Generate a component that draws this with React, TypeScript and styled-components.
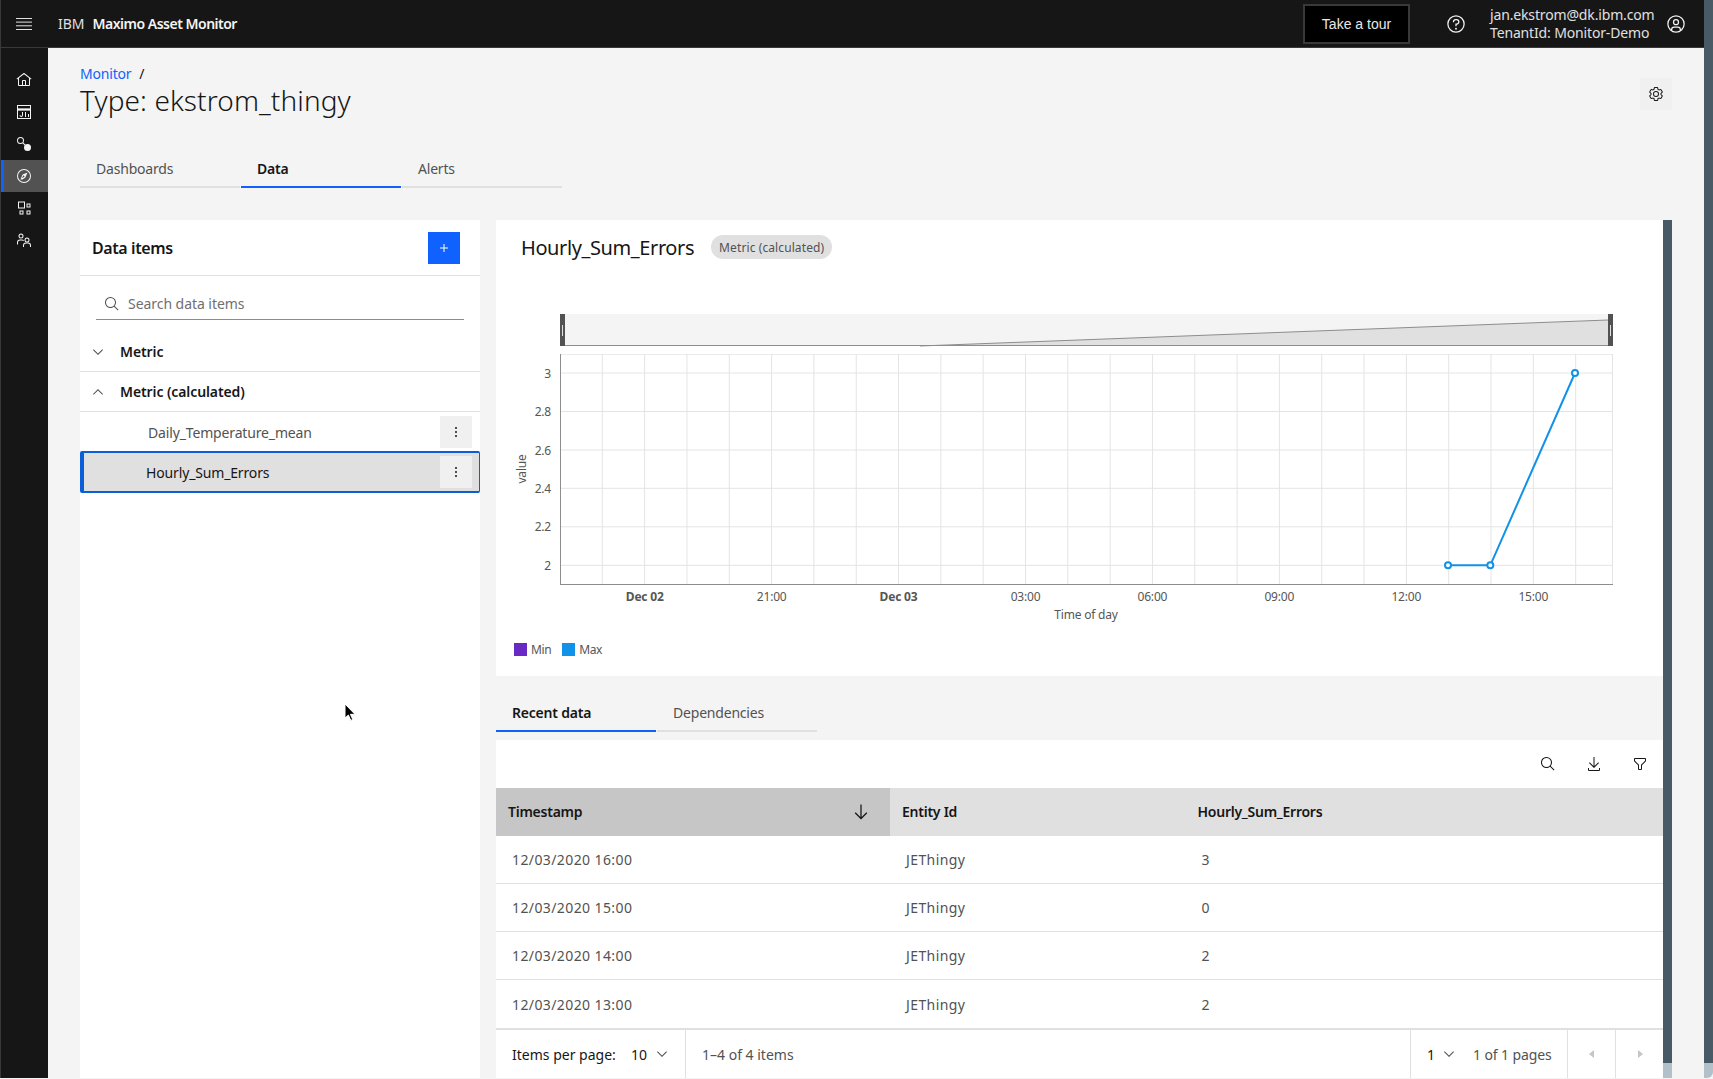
import styled, { createGlobalStyle } from "styled-components";

const FONT = `"Noto Sans", Roboto, "Liberation Sans", sans-serif`;

const GlobalStyle = createGlobalStyle`
    html, body {
        margin: 0;
        padding: 0;
        background: #f4f4f4;
        font-family: ${FONT};
        overflow: hidden;
    }
    * { box-sizing: border-box; }
`;

const Icon = ({ size = 16, fill = "currentColor", children }: { size?: number; fill?: string; children: React.ReactNode }) => (
    <svg width={size} height={size} viewBox="0 0 32 32" fill={fill} style={{ display: "block", flex: "none" }}>
        {children}
    </svg>
);

const SearchIcon = ({ size = 16 }: { size?: number }) => (
    <Icon size={size}><path d="M29 27.586l-7.552-7.552a11.018 11.018 0 1 0-1.414 1.414L27.586 29zM4 13a9 9 0 1 1 9 9 9.01 9.01 0 0 1-9-9z" /></Icon>
);
const ChevronDown = () => <Icon><path d="M16 22L6 12l1.4-1.4 8.6 8.6 8.6-8.6L26 12z" /></Icon>;
const ChevronUp = () => <Icon><path d="M16 10l10 10-1.4 1.4-8.6-8.6-8.6 8.6L6 20z" /></Icon>;
const Overflow = () => <Icon><circle cx="16" cy="8" r="2" /><circle cx="16" cy="16" r="2" /><circle cx="16" cy="24" r="2" /></Icon>;

const HOUR_LINES = Array.from({ length: 24 }, (_, n) => 602.3 + 42.32 * n);
const VALUE_TICKS = [
    { label: "3", y: 373 },
    { label: "2.8", y: 411.5 },
    { label: "2.6", y: 450 },
    { label: "2.4", y: 488.3 },
    { label: "2.2", y: 526.8 },
    { label: "2", y: 565.3 },
];
const TIME_TICKS = [
    { label: "Dec 02", x: 644.7, bold: true },
    { label: "21:00", x: 771.7 },
    { label: "Dec 03", x: 898.5, bold: true },
    { label: "03:00", x: 1025.5 },
    { label: "06:00", x: 1152.4 },
    { label: "09:00", x: 1279.3 },
    { label: "12:00", x: 1406.3 },
    { label: "15:00", x: 1533.3 },
];
const POINTS = [
    [1448, 565.3],
    [1490.3, 565.3],
    [1575, 373],
];
const RECENT = ["16:00|3", "15:00|0", "14:00|2", "13:00|2"];

const NAV = [
    <path key="h" d="M16.612 2.214a1.01 1.01 0 0 0-1.242 0L1 13.419 2.242 15 4 13.63V26a2.006 2.006 0 0 0 2 2h20a2.006 2.006 0 0 0 2-2V13.64L29.758 15 31 13.428zM18 26h-4v-8h4zm2 0v-8a2.002 2.002 0 0 0-2-2h-4a2.002 2.002 0 0 0-2 2v8H6V12.071l10-7.79 10 7.8V26z" />,
    <g key="d">
        <path fillRule="evenodd" d="M2 2h28v28H2zM4 4v5h24V4zM4 13v15h24V13z" />
        <path d="M4 9h24v4H4z" opacity=".55" />
        <path d="M14 16v6.5a3.5 3.5 0 1 1-7 0h2a1.5 1.5 0 1 0 3 0V16zM18 16h2v10h-2zM24 20h2v6h-2z" />
    </g>,
    <g key="n">
        <path d="M9 2a7 7 0 1 0 7 7 7 7 0 0 0-7-7zm0 12a5 5 0 1 1 5-5 5 5 0 0 1-5 5z" />
        <path d="M13.5 15l1.5-1.5 5 5-1.5 1.5z" />
        <circle cx="23" cy="23" r="7" />
    </g>,
    <g key="c">
        <path d="M16 2a14 14 0 1 0 14 14A14 14 0 0 0 16 2zm0 26a12 12 0 1 1 12-12 12 12 0 0 1-12 12z" />
        <path d="M23 9l-4.2 10.2L13 23l-4 0 4.2-10.2zM14.6 14.6l-2.4 5.2 5.2-2.4z" />
    </g>,
    <g key="a">
        <path d="M4 3h14v14H4zm2 2v10h10V5zM21 7h8v8h-8zm2 2v4h4V9zM7 21h8v8H7zm2 2v4h4v-4zM21 21h8v8h-8zm2 2v4h4v-4z" fillRule="evenodd" />
    </g>,
    <g key="u">
        <path d="M10 3a5 5 0 1 0 5 5 5 5 0 0 0-5-5zm0 8a3 3 0 1 1 3-3 3 3 0 0 1-3 3z" />
        <path d="M2 25v-4a6 6 0 0 1 6-6h4a6 6 0 0 1 4 1.6L14.6 18A4 4 0 0 0 12 17H8a4 4 0 0 0-4 4v4z" />
        <path d="M22 11a5 5 0 1 0 5 5 5 5 0 0 0-5-5zm0 8a3 3 0 1 1 3-3 3 3 0 0 1-3 3z" />
        <path d="M30 30h-2v-3a4 4 0 0 0-4-4h-4a4 4 0 0 0-4 4v3h-2v-3a6 6 0 0 1 6-6h4a6 6 0 0 1 6 6z" />
    </g>,
];

export default function App() {
    return (
        <Page>
            <GlobalStyle />
            <Workspace>
                <TopBar>
                    <Hamburger>
                        <svg width="16" height="12" viewBox="0 0 16 12" fill="currentColor">
                            <rect width="16" height="1" />
                            <rect y="3.6" width="16" height="1" />
                            <rect y="7.3" width="16" height="1" />
                            <rect y="11" width="16" height="1" />
                        </svg>
                    </Hamburger>
                    <Brand>IBM<strong>Maximo Asset Monitor</strong></Brand>
                    <TourButton>Take a tour</TourButton>
                    <HeaderIcon $left={36}>
                        <Icon size={20}>
                            <path d="M16 2a14 14 0 1 0 14 14A14 14 0 0 0 16 2zm0 26a12 12 0 1 1 12-12 12 12 0 0 1-12 12z" />
                            <circle cx="16" cy="23.5" r="1.5" />
                            <path d="M17 8h-1.5a4.49 4.49 0 0 0-4.5 4.5v.5h2v-.5a2.5 2.5 0 0 1 2.5-2.5H17a2.5 2.5 0 0 1 0 5h-2v4.5h2V17a4.5 4.5 0 0 0 0-9z" />
                        </Icon>
                    </HeaderIcon>
                    <UserText>
                        <span>jan.ekstrom@dk.ibm.com</span>
                        <span>TenantId: Monitor-Demo</span>
                    </UserText>
                    <HeaderIcon $left={13}>
                        <Icon size={20}>
                            <path d="M16 8a5 5 0 1 0 5 5 5 5 0 0 0-5-5zm0 8a3 3 0 1 1 3-3 3.003 3.003 0 0 1-3 3z" />
                            <path d="M16 2a14 14 0 1 0 14 14A14.016 14.016 0 0 0 16 2zm-6 24.377V25a3.003 3.003 0 0 1 3-3h6a3.003 3.003 0 0 1 3 3v1.377a11.899 11.899 0 0 1-12 0zm13.992-1.451A5.002 5.002 0 0 0 19 20h-6a5.002 5.002 0 0 0-4.992 4.926 12 12 0 1 1 15.985 0z" />
                        </Icon>
                    </HeaderIcon>
                </TopBar>
                <Below>
                    <SideNav>
                        {NAV.map((icon, i) => (
                            <NavItem key={i} $active={i === 3}>
                                <Icon>{icon}</Icon>
                            </NavItem>
                        ))}
                    </SideNav>
                    <Main>
                        <PageHead>
                            <div>
                                <Crumbs><a>Monitor</a><span>/</span></Crumbs>
                                <PageTitle>Type: ekstrom_thingy</PageTitle>
                            </div>
                            <GearButton>
                                <Icon>
                                    <path d="M27 16.76c0-.25 0-.5 0-.76s0-.51 0-.77l1.92-1.68A2 2 0 0 0 29.3 11l-2.36-4a2 2 0 0 0-1.73-1 2 2 0 0 0-.64.1l-2.43.82a11.35 11.35 0 0 0-1.31-.75l-.51-2.52a2 2 0 0 0-2-1.61h-4.68a2 2 0 0 0-2 1.61l-.51 2.52a11.48 11.48 0 0 0-1.32.75l-2.38-.86A2 2 0 0 0 6.79 6a2 2 0 0 0-1.73 1L2.7 11a2 2 0 0 0 .41 2.51L5 15.24c0 .25 0 .5 0 .76s0 .51 0 .77l-1.92 1.68A2 2 0 0 0 2.7 21l2.36 4a2 2 0 0 0 1.73 1 2 2 0 0 0 .64-.1l2.43-.82a11.35 11.35 0 0 0 1.31.75l.51 2.52a2 2 0 0 0 2 1.61h4.72a2 2 0 0 0 2-1.61l.51-2.52a11.48 11.48 0 0 0 1.32-.75l2.42.82a2 2 0 0 0 .64.1 2 2 0 0 0 1.73-1l2.28-4a2 2 0 0 0-.41-2.51zM25.21 24l-3.43-1.16a8.86 8.86 0 0 1-2.71 1.57L18.36 28h-4.72l-.71-3.55a9.36 9.36 0 0 1-2.7-1.57L6.79 24l-2.36-4 2.72-2.4a8.9 8.9 0 0 1 0-3.13L4.43 12l2.36-4 3.43 1.16a8.86 8.86 0 0 1 2.71-1.57L13.64 4h4.72l.71 3.55a9.36 9.36 0 0 1 2.7 1.57L25.21 8l2.36 4-2.72 2.4a8.9 8.9 0 0 1 0 3.13L27.57 20z" />
                                    <path d="M16 22a6 6 0 1 1 6-6 5.94 5.94 0 0 1-6 6zm0-10a3.91 3.91 0 0 0-4 4 3.91 3.91 0 0 0 4 4 3.91 3.91 0 0 0 4-4 3.91 3.91 0 0 0-4-4z" />
                                </Icon>
                            </GearButton>
                        </PageHead>

                        <Tabs $top={28}>
                            <Tab>Dashboards</Tab>
                            <Tab $active>Data</Tab>
                            <Tab>Alerts</Tab>
                        </Tabs>

                        <Content>
                            <ItemsPanel>
                                <ItemsHead>
                                    <h2>Data items</h2>
                                    <AddButton><Icon><path d="M17 15V8h-2v7H8v2h7v7h2v-7h7v-2z" /></Icon></AddButton>
                                </ItemsHead>
                                <SearchBox>
                                    <SearchIcon />
                                    <span>Search data items</span>
                                </SearchBox>
                                <GroupRow>
                                    <ChevronDown />
                                    <span>Metric</span>
                                </GroupRow>
                                <GroupRow>
                                    <ChevronUp />
                                    <span>Metric (calculated)</span>
                                </GroupRow>
                                <ItemRow>
                                    <span>Daily_Temperature_mean</span>
                                    <RowMenu><Overflow /></RowMenu>
                                </ItemRow>
                                <ItemRow $selected>
                                    <span>Hourly_Sum_Errors</span>
                                    <RowMenu><Overflow /></RowMenu>
                                </ItemRow>
                            </ItemsPanel>

                            <DetailColumn>
                                <DetailBody>
                                    <ChartCard>
                                        <ChartHead>
                                            <h3>Hourly_Sum_Errors</h3>
                                            <Tag>Metric (calculated)</Tag>
                                        </ChartHead>
                                        <ChartSvg width="1167" height="330" viewBox="496 300 1167 330">
                                            <rect x="560" y="314" width="1053" height="32" fill="#f4f4f4" />
                                            <polygon points="920,346 1608,320 1608,346" fill="#e0e0e0" />
                                            <line x1="920" y1="346" x2="1608" y2="320" stroke="#8d8d8d" />
                                            <line x1="560" y1="345.5" x2="1613" y2="345.5" stroke="#8d8d8d" />
                                            <rect x="560" y="314" width="5" height="32" fill="#525252" />
                                            <rect x="562" y="325" width="1" height="11" fill="#e0e0e0" />
                                            <rect x="1608" y="314" width="5" height="32" fill="#525252" />
                                            <rect x="1610" y="325" width="1" height="11" fill="#e0e0e0" />

                                            <line x1="560" y1="354.5" x2="1612.5" y2="354.5" stroke="#ececec" />
                                            <line x1="1612.5" y1="354" x2="1612.5" y2="584" stroke="#e4e4e4" />
                                            {HOUR_LINES.map((x) => (
                                                <line key={x} x1={x} y1="354" x2={x} y2="584" stroke="#e4e4e4" />
                                            ))}
                                            {VALUE_TICKS.map((t) => (
                                                <g key={t.label}>
                                                    <line x1="560" y1={t.y} x2="1612.5" y2={t.y} stroke="#e4e4e4" />
                                                    <text x="551" y={t.y + 4.5} textAnchor="end">{t.label}</text>
                                                </g>
                                            ))}
                                            <line x1="560.5" y1="354" x2="560.5" y2="584" stroke="#8d8d8d" />
                                            <line x1="560" y1="584.5" x2="1613" y2="584.5" stroke="#8d8d8d" />
                                            {TIME_TICKS.map((t) => (
                                                <text key={t.label} x={t.x} y="601" textAnchor="middle" fontWeight={t.bold ? 700 : 400}>{t.label}</text>
                                            ))}
                                            <text x="1086" y="619" textAnchor="middle" letterSpacing="-0.5">Time of day</text>
                                            <text transform="translate(526 469) rotate(-90)" textAnchor="middle">value</text>

                                            <polyline points={POINTS.map((p) => p.join(",")).join(" ")} fill="none" stroke="#1192e8" strokeWidth="2" />
                                            {POINTS.map(([x, y]) => (
                                                <circle key={x} cx={x} cy={y} r="3" fill="#fff" stroke="#1192e8" strokeWidth="2" />
                                            ))}
                                        </ChartSvg>
                                        <Legend>
                                            <LegendItem $color="#6929c4">Min</LegendItem>
                                            <LegendItem $color="#1192e8">Max</LegendItem>
                                        </Legend>
                                    </ChartCard>

                                    <Tabs $top={16}>
                                        <Tab $active>Recent data</Tab>
                                        <Tab>Dependencies</Tab>
                                    </Tabs>

                                    <TableCard>
                                        <TableTools>
                                            <ToolButton><SearchIcon /></ToolButton>
                                            <ToolButton>
                                                <Icon><path d="M26 24v4H6v-4H4v4a2 2 0 0 0 2 2h20a2 2 0 0 0 2-2v-4zM26 14l-1.41-1.41L17 20.17V2h-2v18.17l-7.59-7.58L6 14l10 10 10-10z" /></Icon>
                                            </ToolButton>
                                            <ToolButton>
                                                <Icon><path d="M18 28h-4a2 2 0 0 1-2-2v-7.59L4.59 11A2 2 0 0 1 4 9.59V6a2 2 0 0 1 2-2h20a2 2 0 0 1 2 2v3.59a2 2 0 0 1-.59 1.41L20 18.41V26a2 2 0 0 1-2 2zM6 6v3.59l8 8V26h4v-8.41l8-8V6z" /></Icon>
                                            </ToolButton>
                                        </TableTools>
                                        <HeadRow>
                                            <HeadCell $sorted>
                                                Timestamp
                                                <Icon size={20}><path d="M24.59 16.59L17 24.17V4h-2v20.17l-7.59-7.58L6 18l10 10 10-10-1.41-1.41z" /></Icon>
                                            </HeadCell>
                                            <HeadCell>Entity Id</HeadCell>
                                            <HeadCell>Hourly_Sum_Errors</HeadCell>
                                        </HeadRow>
                                        {RECENT.map((r, i) => {
                                            const [time, value] = r.split("|");
                                            return (
                                                <BodyRow key={r} $last={i === RECENT.length - 1}>
                                                    <span>12/03/2020 {time}</span>
                                                    <span>JEThingy</span>
                                                    <span>{value}</span>
                                                </BodyRow>
                                            );
                                        })}
                                        <Pager>
                                            <PerPage>
                                                <PerPageLabel>Items per page:</PerPageLabel>
                                                <PagerValue>10</PagerValue>
                                                <ChevronDown />
                                            </PerPage>
                                            <PagerInfo>1–4 of 4 items</PagerInfo>
                                            <PageSelect>
                                                <PagerValue>1</PagerValue>
                                                <ChevronDown />
                                                <PagerNote>1 of 1 pages</PagerNote>
                                            </PageSelect>
                                            <PageStep>
                                                <svg width="16" height="16" viewBox="0 0 32 32" fill="currentColor"><path d="M20 24l-10-8 10-8z" /></svg>
                                            </PageStep>
                                            <PageStep>
                                                <svg width="16" height="16" viewBox="0 0 32 32" fill="currentColor"><path d="M12 8l10 8-10 8z" /></svg>
                                            </PageStep>
                                        </Pager>
                                    </TableCard>
                                </DetailBody>
                                <ScrollBar />
                            </DetailColumn>
                        </Content>
                    </Main>
                </Below>
            </Workspace>
            <ScrollBar $corner />
            <Cursor width="12" height="18" viewBox="0 0 12 18">
                <path d="M1 1v14l3.4-3 2.4 5.4 2-.9-2.4-5.2H11z" fill="#000" stroke="#fff" strokeWidth="1" />
            </Cursor>
        </Page>
    );
}

const Page = styled.div`
    position: relative;
    display: flex;
    width: 1713px;
    height: 1078px;
    overflow: hidden;
`;

const Workspace = styled.div`
    flex: 1;
    min-width: 0;
    display: flex;
    flex-direction: column;
`;

const ScrollBar = styled.div<{ $corner?: boolean }>`
    flex: none;
    width: 9px;
    background: linear-gradient(to bottom, #485a65 calc(100% - 15px), #b2c1c9 calc(100% - 15px));
    border-bottom-right-radius: ${({ $corner }) => ($corner ? "6px" : "0")};
`;

const TopBar = styled.header`
    flex: none;
    height: 48px;
    display: flex;
    align-items: center;
    padding-right: 18px;
    background: #161616;
    border-left: 1px solid #393939;
    border-bottom: 1px solid #393939;
    color: #f4f4f4;
`;

const Hamburger = styled.div`
    width: 46px;
    display: flex;
    justify-content: center;
    color: #e0e0e0;
`;

const Brand = styled.div`
    margin-left: 11px;
    font-size: 14px;
    color: #e0e0e0;

    strong {
        margin-left: 8px;
        font-weight: 600;
        letter-spacing: -0.5px;
        color: #f4f4f4;
    }
`;

const TourButton = styled.button`
    margin-left: auto;
    width: 107px;
    height: 40px;
    background: #000;
    border: 2px solid #393939;
    color: #e8e8e8;
    font-family: "Liberation Sans", sans-serif;
    font-size: 14px;
    padding: 0;
`;

const HeaderIcon = styled.div<{ $left: number }>`
    margin-left: ${({ $left }) => $left}px;
    color: #f4f4f4;
`;

const UserText = styled.div`
    width: 163px;
    margin-left: 24px;
    display: flex;
    flex-direction: column;
    font-size: 14px;
    line-height: 18px;
    color: #e0e0e0;
    letter-spacing: -0.15px;
    white-space: nowrap;
`;

const Below = styled.div`
    flex: 1;
    min-height: 0;
    display: flex;
`;

const SideNav = styled.nav`
    flex: none;
    width: 48px;
    padding-top: 16px;
    background: #161616;
    border-left: 1px solid #393939;
`;

const NavItem = styled.div<{ $active?: boolean }>`
    height: 32px;
    display: flex;
    align-items: center;
    justify-content: center;
    padding-right: 1px;
    color: #f4f4f4;
    background: ${({ $active }) => ($active ? "#525252" : "transparent")};
    box-shadow: ${({ $active }) => ($active ? "inset 3px 0 0 #0f62fe" : "none")};
`;

const Main = styled.main`
    flex: 1;
    min-width: 0;
    display: flex;
    flex-direction: column;
    padding: 16px 32px 0;
    background: #f4f4f4;
`;

const PageHead = styled.div`
    flex: none;
    height: 56px;
    display: flex;
    justify-content: space-between;
    align-items: flex-start;
`;

const Crumbs = styled.div`
    height: 18px;
    display: flex;
    align-items: center;
    gap: 8px;
    font-size: 14px;
    letter-spacing: -0.2px;
    color: #161616;

    a {
        color: #0f62fe;
    }
`;

const PageTitle = styled.h1`
    margin: 0;
    font-size: 28px;
    line-height: 36px;
    font-weight: 300;
    letter-spacing: 0.1px;
    color: #161616;
`;

const GearButton = styled.div`
    width: 32px;
    height: 32px;
    margin-top: 14px;
    display: flex;
    align-items: center;
    justify-content: center;
    background: #f0f0f0;
    color: #161616;
`;

const Tabs = styled.div<{ $top: number }>`
    flex: none;
    display: flex;
    gap: 1px;
    margin-top: ${({ $top }) => $top}px;
`;

const Tab = styled.div<{ $active?: boolean }>`
    width: 160px;
    height: 40px;
    display: flex;
    align-items: center;
    padding: 3px 0 0 16px;
    font-size: 14px;
    letter-spacing: -0.2px;
    font-weight: ${({ $active }) => ($active ? 600 : 400)};
    color: ${({ $active }) => ($active ? "#161616" : "#525252")};
    border-bottom: 2px solid ${({ $active }) => ($active ? "#0f62fe" : "#e0e0e0")};
`;

const Content = styled.div`
    flex: 1;
    min-height: 0;
    margin-top: 32px;
    display: flex;
    gap: 16px;
`;

const ItemsPanel = styled.section`
    flex: none;
    width: 400px;
    background: #fff;
`;

const ItemsHead = styled.div`
    height: 56px;
    display: flex;
    align-items: center;
    justify-content: space-between;
    padding: 0 20px 0 12px;
    border-bottom: 1px solid #e0e0e0;

    h2 {
        margin: 0;
        font-size: 16px;
        font-weight: 600;
        letter-spacing: -0.4px;
        color: #161616;
    }
`;

const AddButton = styled.div`
    width: 32px;
    height: 32px;
    display: flex;
    align-items: center;
    justify-content: center;
    background: #0f62fe;
    color: #fff;
`;

const SearchBox = styled.div`
    height: 32px;
    margin: 12px 16px 12px;
    padding-left: 8px;
    display: flex;
    align-items: center;
    gap: 8px;
    border-bottom: 1px solid #8d8d8d;
    font-size: 14px;
    letter-spacing: -0.05px;
    color: #6f6f6f;

    svg {
        color: #525252;
    }
`;

const GroupRow = styled.div`
    height: 40px;
    display: flex;
    align-items: center;
    padding-left: 10px;
    gap: 14px;
    border-bottom: 1px solid #e0e0e0;
    font-size: 14px;
    font-weight: 600;
    letter-spacing: -0.1px;
    color: #161616;

    svg {
        color: #525252;
    }
`;

const ItemRow = styled.div<{ $selected?: boolean }>`
    display: flex;
    align-items: center;
    justify-content: space-between;
    font-size: 14px;
    letter-spacing: -0.15px;
    height: ${({ $selected }) => ($selected ? "42px" : "40px")};
    margin-top: ${({ $selected }) => ($selected ? "-1px" : "0")};
    padding: ${({ $selected }) => ($selected ? "0 7px 0 62px" : "0 8px 0 68px")};
    background: ${({ $selected }) => ($selected ? "#e0e0e0" : "#fff")};
    color: ${({ $selected }) => ($selected ? "#161616" : "#525252")};
    border: ${({ $selected }) => ($selected ? "2px solid #0a5fd8" : "0 none")};
    border-left-width: ${({ $selected }) => ($selected ? "4px" : "0")};
    border-right-width: ${({ $selected }) => ($selected ? "1px" : "0")};
    border-radius: ${({ $selected }) => ($selected ? "2px" : "0")};
`;

const RowMenu = styled.div`
    width: 32px;
    height: 32px;
    display: flex;
    align-items: center;
    justify-content: center;
    background: #f0f0f0;
    color: #161616;
`;

const DetailColumn = styled.div`
    flex: 1;
    min-width: 0;
    display: flex;
`;

const DetailBody = styled.div`
    flex: 1;
    min-width: 0;
    display: flex;
    flex-direction: column;
`;

const ChartCard = styled.section`
    flex: none;
    height: 456px;
    background: #fff;
`;

const ChartHead = styled.div`
    height: 54px;
    display: flex;
    align-items: center;
    padding-left: 25px;
    gap: 17px;

    h3 {
        margin: 0;
        font-size: 20px;
        font-weight: 400;
        letter-spacing: -0.4px;
        color: #161616;
    }
`;

const Tag = styled.span`
    height: 24px;
    padding: 0 8px;
    display: flex;
    align-items: center;
    border-radius: 12px;
    background: #e0e0e0;
    font-size: 12px;
    letter-spacing: 0.1px;
    color: #525252;
`;

const ChartSvg = styled.svg`
    display: block;
    margin-top: 26px;

    text {
        font-family: ${FONT};
        font-size: 12px;
        letter-spacing: -0.2px;
        fill: #565656;
    }
`;

const Legend = styled.div`
    margin-top: 13px;
    padding-left: 18px;
    display: flex;
    gap: 11px;
`;

const LegendItem = styled.span<{ $color: string }>`
    display: flex;
    align-items: center;
    gap: 4px;
    height: 13px;
    font-size: 12px;
    letter-spacing: -0.4px;
    color: #565656;

    &::before {
        content: "";
        width: 13px;
        height: 13px;
        background: ${({ $color }) => $color};
    }
`;

const TableCard = styled.section`
    flex: 1;
    min-height: 0;
    margin-top: 8px;
    background: #fff;
    display: flex;
    flex-direction: column;
`;

const TableTools = styled.div`
    flex: none;
    height: 48px;
    display: flex;
    justify-content: flex-end;
`;

const ToolButton = styled.div`
    width: 46px;
    display: flex;
    align-items: center;
    justify-content: center;
    color: #161616;
`;

const HeadRow = styled.div`
    flex: none;
    height: 48px;
    display: grid;
    grid-template-columns: 394px 295.5px 1fr;
    background: #e0e0e0;
`;

const HeadCell = styled.div<{ $sorted?: boolean }>`
    display: flex;
    align-items: center;
    justify-content: space-between;
    padding: 0 ${({ $sorted }) => ($sorted ? "19px" : "12px")} 1px 12px;
    background: ${({ $sorted }) => ($sorted ? "#c6c6c6" : "transparent")};
    font-size: 14px;
    font-weight: 600;
    letter-spacing: -0.25px;
    color: #161616;
`;

const BodyRow = styled.div<{ $last?: boolean }>`
    flex: none;
    height: 48px;
    display: grid;
    grid-template-columns: 394px 295.5px 1fr;
    align-items: center;
    border-bottom: ${({ $last }) => ($last ? "0 none" : "1px solid #e0e0e0")};
    font-size: 14px;
    letter-spacing: 0.4px;
    color: #525252;

    span {
        padding-left: 16px;
    }
`;

const Pager = styled.div`
    flex: 1;
    display: flex;
    align-items: stretch;
    border-top: 2px solid #e0e0e0;
    font-size: 14px;
`;

const PerPage = styled.div`
    width: 190px;
    padding-left: 16px;
    display: flex;
    align-items: center;
    border-right: 1px solid #e0e0e0;
    color: #161616;

    svg {
        margin-left: 7px;
        color: #525252;
    }
`;

const PerPageLabel = styled.span`
    width: 119px;
    white-space: nowrap;
`;

const PagerValue = styled.span`
    color: #161616;
`;

const PagerInfo = styled.div`
    flex: 1;
    padding-left: 16px;
    display: flex;
    align-items: center;
    color: #525252;
`;

const PageSelect = styled.div`
    width: 157px;
    padding-left: 16px;
    display: flex;
    align-items: center;
    border-left: 1px solid #e0e0e0;

    svg {
        margin-left: 6px;
        color: #525252;
    }
`;

const PagerNote = styled.span`
    margin-left: 16px;
    letter-spacing: -0.1px;
    color: #525252;
`;

const PageStep = styled.div`
    width: 48px;
    display: flex;
    align-items: center;
    justify-content: center;
    border-left: 1px solid #e0e0e0;
    color: #c6c6c6;
`;

const Cursor = styled.svg`
    position: absolute;
    left: 344px;
    top: 703px;
`;
